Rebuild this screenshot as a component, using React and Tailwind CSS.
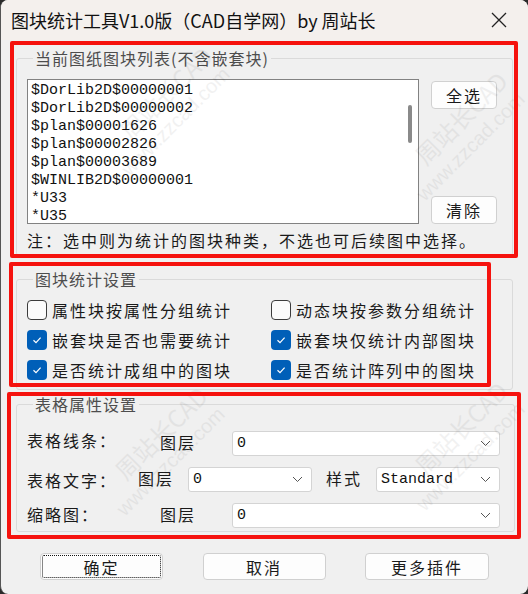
import React, { useState } from 'react';

const cjk = { fontFamily: '"Noto Sans CJK SC", "Noto Sans", sans-serif' };
const mono = { fontFamily: '"Liberation Mono", "Noto Sans CJK SC", monospace' };

const blocks = [
  '$DorLib2D$00000001',
  '$DorLib2D$00000002',
  '$plan$00001626',
  '$plan$00002826',
  '$plan$00003689',
  '$WINLIB2D$00000001',
  '*U33',
  '*U35',
];

// faint diagonal watermark pairs, centre points
const marks = [
  { x: 175, y: 105 },
  { x: 470, y: 130 },
  { x: 170, y: 445 },
  { x: 470, y: 440 },
];

const Check = ({ checked, label, onClick }) => (
  <label className="flex items-center gap-[5px] cursor-default" onClick={onClick}>
    {checked ? (
      <span className="w-[20px] h-[20px] rounded-[4px] bg-[#005fb8] flex items-center justify-center">
        <svg width="12" height="12" viewBox="0 0 12 12">
          <path d="M2.5 6.2 L5 8.6 L9.6 3.6" fill="none" stroke="#fff" strokeWidth="1.2" />
        </svg>
      </span>
    ) : (
      <span className="w-[20px] h-[20px] rounded-[4px] border border-[#3c3c3c] bg-[#fbfbfb]" />
    )}
    <span className="text-[16px] tracking-[2px] text-[#1a1a1a] leading-[22px]">{label}</span>
  </label>
);

const Combo = ({ value, className }) => (
  <div className={`h-[25px] bg-white border border-[#d4d4d4] rounded-[3px] flex items-center justify-between pl-[4px] pr-[8px] tracking-normal ${className}`}>
    <span className="text-[15px] text-[#111] mt-[2px]" style={mono}>{value}</span>
    <svg width="11" height="7" viewBox="0 0 11 7">
      <path d="M1 1 L5.5 5.5 L10 1" fill="none" stroke="#555" strokeWidth="1" />
    </svg>
  </div>
);

const Btn = ({ children, className = '' }) => (
  <button className={`bg-[#fdfdfd] border border-[#d0d0d0] rounded-[4px] text-[16px] tracking-[2px] text-[#1a1a1a] ${className}`}>
    {children}
  </button>
);

const App = () => {
  const [checks, setChecks] = useState([false, false, true, true, true, true]);
  const toggle = (i) => setChecks((c) => c.map((v, j) => (j === i ? !v : v)));
  const labels = [
    '属性块按属性分组统计',
    '动态块按参数分组统计',
    '嵌套块是否也需要统计',
    '嵌套块仅统计内部图块',
    '是否统计成组中的图块',
    '是否统计阵列中的图块',
  ];

  return (
    <div className="w-[528px] h-[594px] bg-[#2a2a2a] relative overflow-hidden" style={cjk}>
      <div className="h-full rounded-[8px] bg-[#f0f0f0] overflow-hidden border-l border-[#555] flex flex-col">
        {/* title bar */}
        <div className="h-[40px] shrink-0 bg-[#f4f0ed] flex items-center justify-between pl-[10px] pr-[20px]">
          <span className="text-[18px] text-[#111]">图块统计工具V1.0版（CAD自学网）by 周站长</span>
          <svg width="18" height="18" viewBox="0 0 18 18">
            <path d="M2 2 L16 16 M16 2 L2 16" stroke="#222" strokeWidth="1.3" />
          </svg>
        </div>

        {/* block list group */}
        <fieldset className="mx-[15px] mt-[7px] border border-[#dadada] rounded-[3px] px-[10px] pb-[4px]">
          <legend className="ml-[6px] px-[2px] text-[16px] tracking-[1px] text-[#4d4d4d] leading-[22px]">当前图纸图块列表(不含嵌套块)</legend>
          <div className="flex justify-between mt-[10px]">
            <div className="w-[392px] h-[145px] bg-white border border-[#828282] flex">
              <div className="flex-1 pl-[3px] pt-[2px]">
                {blocks.map((b) => (
                  <div key={b} className="text-[15px] leading-[18px] text-[#111]" style={mono}>{b}</div>
                ))}
              </div>
              <div className="w-[16px] flex justify-center pt-[25px]">
                <div className="w-[4px] h-[38px] rounded-full bg-[#8a8a8a]" />
              </div>
            </div>
            <div className="flex flex-col justify-between pt-[2px] mr-[5px]">
              <Btn className="w-[66px] h-[28px]">全选</Btn>
              <Btn className="w-[66px] h-[28px]">清除</Btn>
            </div>
          </div>
          <div className="mt-[5px] text-[16px] tracking-[2px] text-[#1a1a1a] leading-[22px]">注：选中则为统计的图块种类，不选也可后续图中选择。</div>
        </fieldset>

        {/* statistics settings */}
        <fieldset className="mx-[15px] mt-[12px] border border-[#dadada] rounded-[3px] pl-[10px] pb-[8px]">
          <legend className="ml-[6px] px-[2px] text-[16px] tracking-[1px] text-[#4d4d4d] leading-[22px]">图块统计设置</legend>
          <div className="grid grid-cols-[244px_1fr] gap-y-[8px] mt-[9px]">
            {labels.map((l, i) => (
              <Check key={l} label={l} checked={checks[i]} onClick={() => toggle(i)} />
            ))}
          </div>
        </fieldset>

        {/* table settings */}
        <fieldset className="mx-[15px] mt-[3px] border border-[#dadada] rounded-[3px] pl-[10px] pr-[14px] pb-[3px]">
          <legend className="ml-[6px] px-[2px] text-[16px] tracking-[1px] text-[#4d4d4d] leading-[22px]">表格属性设置</legend>
          <div className="flex flex-col gap-[11px] mt-[16px] text-[16px] tracking-[2px] text-[#1a1a1a]">
            <div className="flex items-center">
              <span className="w-[133px] -mt-[8px]">表格线条：</span>
              <span className="w-[72px] -mt-[3px]">图层</span>
              <Combo value="0" className="flex-1" />
            </div>
            <div className="flex items-center">
              <span className="w-[111px]">表格文字：</span>
              <span className="w-[50px] -mt-[4px]">图层</span>
              <Combo value="0" className="w-[124px]" />
              <span className="ml-[14px] w-[50px] -mt-[4px]">样式</span>
              <Combo value="Standard" className="w-[124px]" />
            </div>
            <div className="flex items-center">
              <span className="w-[133px] -mt-[4px]">缩略图：</span>
              <span className="w-[72px] -mt-[3px]">图层</span>
              <Combo value="0" className="flex-1" />
            </div>
          </div>
        </fieldset>

        {/* bottom buttons */}
        <div className="flex justify-between pl-[39px] pr-[39px] mt-[21px]">
          <Btn className="w-[123px] h-[27px] border-[#1b5fa8] outline-dotted outline-1 outline-[#111] -outline-offset-[3px]">确定</Btn>
          <Btn className="w-[123px] h-[27px]">取消</Btn>
          <Btn className="w-[124px] h-[27px]">更多插件</Btn>
        </div>
      </div>

      {/* watermark */}
      {marks.map((m, i) => (
        <div
          key={i}
          className="absolute pointer-events-none -rotate-45 flex flex-col items-center text-[#000] opacity-[0.05] whitespace-nowrap"
          style={{ left: m.x - 70, top: m.y - 30 }}
        >
          <span className="text-[24px] leading-[28px] w-[140px] text-center">周站长CAD</span>
          <span className="text-[20px] leading-[26px] w-[140px] text-center -ml-[30px]" style={{ fontFamily: '"Liberation Sans", sans-serif' }}>www.zzcad.com</span>
        </div>
      ))}

      {/* red annotation frames */}
      <div className="absolute left-[10px] top-[41px] w-[508px] h-[217px] border-4 border-[#f5120e] rounded-[2px] pointer-events-none" />
      <div className="absolute left-[9px] top-[262px] w-[482px] h-[125px] border-4 border-[#f5120e] rounded-[2px] pointer-events-none" />
      <div className="absolute left-[7px] top-[392px] w-[514px] h-[147px] border-4 border-[#f5120e] rounded-[2px] pointer-events-none" />
    </div>
  );
};

export default App;
